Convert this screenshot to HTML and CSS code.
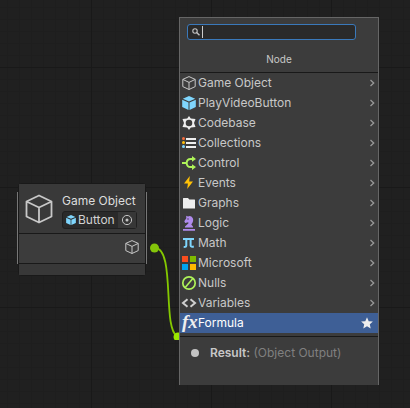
FILE: index.html
```html
<!DOCTYPE html>
<html lang="en">
<head>
<meta charset="utf-8">
<title>Script Graph</title>
<link rel="stylesheet" href="styles.css">
</head>
<body>
<svg class="defs" aria-hidden="true">
  <symbol id="cube" viewBox="0 0 14 14"><path d="M7 .6 13.200 3.400V10.600L7 13.500.8 10.600V3.400ZM.8 3.400 7 6.400 13.200 3.400M7 6.400V13.500" fill="none" stroke="currentColor" stroke-linejoin="round"/></symbol>
  <symbol id="prefab" viewBox="0 0 14 14"><path d="M7 0 13.200 2.700 7 5.400.8 2.700ZM.2 3.700 6.500 6.500V14L.2 11.100ZM13.800 3.700 7.500 6.500V14L13.800 11.100Z" fill="#7fd6fd"/></symbol>
  <symbol id="chevron" viewBox="0 0 6 8"><path d="M1.500 1 4.700 4 1.500 7" fill="none" stroke="currentColor" stroke-width="1.300"/></symbol>
</svg>
<main class="canvas">
  <svg class="wire" width="70" height="110" viewBox="0 0 70 110" aria-hidden="true">
    <path d="M14 18C36 16 22 98 37 106" fill="none" stroke="#84c800" stroke-width="1.800"/>
    <circle cx="14.500" cy="18" r="4.500" fill="#84c40a"/>
    <circle cx="38" cy="107" r="4.500" fill="#9be600"/>
  </svg>

  <section class="node">
    <header class="node-head">
      <svg class="node-icon" viewBox="0 0 28 30" aria-hidden="true"><path d="M14 1.500 26.500 7.500V22.500L14 28.500 1.500 22.500V7.500ZM1.500 7.500 14 13.500 26.500 7.500M14 13.500V28" fill="none" stroke="#c8c8c8" stroke-width="1.800" stroke-linejoin="round"/></svg>
      <div class="node-info">
        <h2 class="node-title">Game Object</h2>
        <div class="object-field">
          <svg class="field-icon" aria-hidden="true"><use href="#prefab"/></svg>
          <span class="field-value">Button</span>
          <button class="picker" aria-label="Select object"><svg viewBox="0 0 12 12"><circle cx="6" cy="6" r="4.600" fill="none" stroke="#c4c4c4"/><circle cx="6" cy="6" r="1.500" fill="#c4c4c4"/></svg></button>
        </div>
      </div>
    </header>
    <div class="node-port"><svg class="icon" aria-hidden="true"><use href="#cube"/></svg></div>
    <footer class="node-foot"></footer>
  </section>

  <section class="finder">
    <header class="finder-head">
      <label class="search">
        <svg class="search-icon" viewBox="0 0 8 8" aria-hidden="true"><circle cx="3" cy="3" r="2.200" fill="none" stroke="#c4c4c4" stroke-width="1.100"/><path d="M4.600 4.600 7.500 7.300" stroke="#c4c4c4" stroke-width="1.400"/></svg>
        <span class="caret"></span>
        <input class="search-input" type="text" aria-label="Search nodes">
      </label>
      <h1 class="finder-title">Node</h1>
    </header>
    <nav class="options">
      <button class="option"><svg class="icon"><use href="#cube"/></svg><span class="name">Game Object</span><svg class="chevron"><use href="#chevron"/></svg></button>
      <button class="option"><svg class="icon"><use href="#prefab"/></svg><span class="name">PlayVideoButton</span><svg class="chevron"><use href="#chevron"/></svg></button>
      <button class="option"><svg class="icon" viewBox="0 0 14 14"><path d="M7 0 8.800 2.500 13.500 2.900 12 7 13.500 11.100 8.800 11.500 7 14 5.200 11.500.5 11.100 2 7 .5 2.900 5.200 2.500ZM7 3.700A3.300 3.300 0 1 0 7 10.300 3.300 3.300 0 1 0 7 3.700Z" fill="#eee" fill-rule="evenodd"/></svg><span class="name">Codebase</span><svg class="chevron"><use href="#chevron"/></svg></button>
      <button class="option"><svg class="icon" viewBox="0 0 14 14"><path d="M4 2h10v2H4zM4 6h10v2H4zM4 10h10v2H4z" fill="#eee"/><circle cx="1.500" cy="2.500" r="1.500" fill="#f46c3d"/><circle cx="1.500" cy="6.500" r="1.500" fill="#ffbd0a"/><circle cx="1.500" cy="10.500" r="1.500" fill="#7fd6fd"/></svg><span class="name">Collections</span><svg class="chevron"><use href="#chevron"/></svg></button>
      <button class="option"><svg class="icon" viewBox="0 0 14 14"><path d="M0 7H4.500M11 2.900H8.500Q5 2.900 4.600 7 5 11.100 8.500 11.100H11" fill="none" stroke="#aef359" stroke-width="2"/><path d="M10 0 14 2.900 10 5.800ZM10 8.200 14 11.100 10 14Z" fill="#aef359"/></svg><span class="name">Control</span><svg class="chevron"><use href="#chevron"/></svg></button>
      <button class="option"><svg class="icon" viewBox="0 0 14 14"><path d="M7.800 0 2 7.400H5.900L5.200 13 11 5.600H7.200Z" fill="#ffc107"/></svg><span class="name">Events</span><svg class="chevron"><use href="#chevron"/></svg></button>
      <button class="option"><svg class="icon" viewBox="0 0 14 14"><path d="M1 2.500Q1 2 1.500 2H6L7.300 3.500H12.500Q13 3.500 13 4V12.500H1Z" fill="#eee"/></svg><span class="name">Graphs</span><svg class="chevron"><use href="#chevron"/></svg></button>
      <button class="option"><svg class="icon" viewBox="0 0 14 14"><path d="M1 13h12v1.800H1zM3 11.600V10.500L6.500 7.300 6.200 6.200 3.200 7 2.300 5.200 4.300 2.200 4.200-.3 6 .5Q9-.8 10.700 2 12.200 5 9.300 8.400L11 10.500V11.600Z" fill="#b08cee"/><circle cx="6" cy="3" r=".7" fill="#3c3c3c"/></svg><span class="name">Logic</span><svg class="chevron"><use href="#chevron"/></svg></button>
      <button class="option"><svg class="icon" viewBox="0 0 14 14"><path d="M1 3H12M4.300 3V9.500Q4.300 11 1.700 11M8.600 3V9.500Q8.600 11.200 11.800 10.500" fill="none" stroke="#7fd6fd" stroke-width="2"/></svg><span class="name">Math</span><svg class="chevron"><use href="#chevron"/></svg></button>
      <button class="option"><svg class="icon" viewBox="0 0 14 14"><path d="M0 0h6v6H0z" fill="#fa4d1e"/><path d="M8 0h6v6H8z" fill="#7fba00"/><path d="M0 8h6v6H0z" fill="#00a4ef"/><path d="M8 8h6v6H8z" fill="#ffb900"/></svg><span class="name">Microsoft</span><svg class="chevron"><use href="#chevron"/></svg></button>
      <button class="option"><svg class="icon" viewBox="0 0 14 14"><circle cx="7" cy="7" r="6.200" fill="none" stroke="#aef359" stroke-width="1.700"/><path d="M3.400 11.200 10.600 2.800" stroke="#aef359" stroke-width="1.600"/></svg><span class="name">Nulls</span><svg class="chevron"><use href="#chevron"/></svg></button>
      <button class="option"><svg class="icon" viewBox="0 0 14 14"><path d="M5.500 3.300 1 7 5.500 10.700M8.500 3.300 13 7 8.500 10.700" fill="none" stroke="#d0d0d0" stroke-width="2"/></svg><span class="name">Variables</span><svg class="chevron"><use href="#chevron"/></svg></button>
      <button class="option selected"><span class="icon fx">fx</span><span class="name">Formula</span><svg class="star" viewBox="0 0 12 12"><path d="M6 .3 7.700 4.200 11.900 4.600 8.800 7.300 9.700 11.500 6 9.300 2.300 11.500 3.200 7.300.1 4.600 4.300 4.200Z" fill="#eee"/></svg></button>
    </nav>
    <footer class="result"><span class="dot"></span><p class="result-text"><strong>Result:</strong> <span class="type">(Object Output)</span></p></footer>
  </section>
</main>
</body>
</html>
```
FILE: styles.css
```css
* { box-sizing: border-box; }

body {
  margin: 0;
  font: 12px/20px Inter, "Liberation Sans", sans-serif;
  color: #c8c8c8;
}

h1, h2, p { margin: 0; font-weight: 400; }

button {
  border: 0;
  padding: 0;
  background: none;
  color: inherit;
  font: inherit;
}

.defs { position: absolute; width: 0; height: 0; }

.canvas {
  position: relative;
  min-height: 100vh;
  overflow: hidden;
  background-color: #202020;
  background-image:
    linear-gradient(#191919 1px, transparent 1px),
    linear-gradient(90deg, #191919 1px, transparent 1px),
    linear-gradient(#1e1e1e 1px, transparent 1px),
    linear-gradient(90deg, #1e1e1e 1px, transparent 1px);
  background-size: 120px 120px, 120px 120px, 12px 12px, 12px 12px;
  background-position: 0 67px, 91px 0, 0 7px, 7px 0;
}

.wire { position: absolute; left: 140px; top: 230px; }

/* Graph node */
.node {
  position: absolute;
  left: 18px;
  top: 183px;
  width: 128px;
  border: 1px solid #191919;
  border-radius: 3px;
  background: #3c3c3c;
}

.node::before {
  content: "";
  position: absolute;
  inset: 8px -2px 11px;
  border: solid #777;
  border-width: 0 1px;
}

.node-head {
  display: flex;
  gap: 9px;
  padding: 7px 8px 4px 6px;
  border-bottom: 1px solid #191919;
  background: #393939;
}

.node-icon { flex: none; width: 28px; height: 30px; margin-top: 3px; }
.node-info { flex: 1; }
.node-title { font-size: 12px; line-height: 20px; color: #ddd; white-space: nowrap; }

.object-field {
  display: flex;
  align-items: center;
  height: 18px;
  border: 1px solid #202020;
  border-radius: 3px;
  background: #2a2a2a;
}

.field-icon { flex: none; width: 10px; height: 10px; margin: 0 2px 0 3px; }
.field-value { flex: 1; line-height: 16px; color: #d2d2d2; }
.picker { width: 18px; height: 16px; background: #373737; display: grid; place-items: center; }
.picker svg { width: 12px; height: 12px; }

.node-port {
  display: flex;
  justify-content: flex-end;
  padding: 6px 6px 9px;
  border-bottom: 1px solid #191919;
}

.node-foot { height: 11px; background: #383838; }

/* Fuzzy finder */
.finder {
  position: absolute;
  left: 179px;
  top: 17px;
  width: 200px;
  height: 368px;
  border: 1px solid #666;
  border-bottom: 0;
  background: #3c3c3c;
}

.finder-head { padding: 6px 22px 0 7px; border-bottom: 1px solid #191919; }

.search {
  display: flex;
  align-items: center;
  height: 16px;
  border: 1px solid #3a79bb;
  border-radius: 3px;
  background: #2a2a2a;
}

.search-icon { width: 8px; height: 8px; margin: 0 2px 0 4px; }
.caret { width: 1px; height: 12px; background: #ccc; }

.search-input {
  flex: 1;
  min-width: 0;
  height: 14px;
  padding: 0;
  border: 0;
  outline: 0;
  background: none;
  color: inherit;
  font: 11px/14px Inter, sans-serif;
}

.finder-title {
  margin: 9px -15px 3px 0;
  font-size: 10px;
  line-height: 20px;
  text-align: center;
}

.options { display: flex; flex-direction: column; padding-bottom: 3px; border-bottom: 1px solid #191919; }

.option {
  display: flex;
  align-items: center;
  gap: 2px;
  height: 20px;
  padding: 0 3px 1px 2px;
  text-align: left;
}

.icon { width: 14px; height: 14px; flex: none; overflow: visible; }
.name { flex: 1; line-height: 20px; }
.chevron { width: 6px; height: 8px; color: #999; }
.selected { background: #3e5f96; color: #fff; }
.star { width: 12px; height: 12px; margin-right: 2px; }

.fx {
  font: italic bold 19px/11px "Liberation Serif", serif;
  color: #eee;
}

.result { display: flex; align-items: center; gap: 11px; padding: 6px 11px; }
.dot { width: 8px; height: 8px; border-radius: 50%; background: #c4c4c4; }
.result-text { font-size: 12px; line-height: 20px; white-space: nowrap; }
.result-text strong { font-weight: 600; }
.type { color: #808080; }
```
